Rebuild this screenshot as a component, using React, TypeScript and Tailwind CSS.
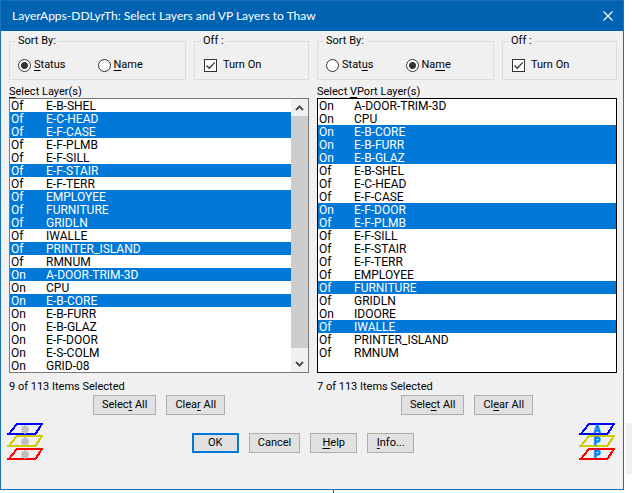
/**
 * Layer Thaw Dialog
 */

import { useState, type ReactNode } from 'react';

type Layer = { state: 'On' | 'Of'; name: string; selected?: boolean };

const LAYERS: Layer[] = [
  { state: 'Of', name: 'E-B-SHEL' },
  { state: 'Of', name: 'E-C-HEAD', selected: true },
  { state: 'Of', name: 'E-F-CASE', selected: true },
  { state: 'Of', name: 'E-F-PLMB' },
  { state: 'Of', name: 'E-F-SILL' },
  { state: 'Of', name: 'E-F-STAIR', selected: true },
  { state: 'Of', name: 'E-F-TERR' },
  { state: 'Of', name: 'EMPLOYEE', selected: true },
  { state: 'Of', name: 'FURNITURE', selected: true },
  { state: 'Of', name: 'GRIDLN', selected: true },
  { state: 'Of', name: 'IWALLE' },
  { state: 'Of', name: 'PRINTER_ISLAND', selected: true },
  { state: 'Of', name: 'RMNUM' },
  { state: 'On', name: 'A-DOOR-TRIM-3D', selected: true },
  { state: 'On', name: 'CPU' },
  { state: 'On', name: 'E-B-CORE', selected: true },
  { state: 'On', name: 'E-B-FURR' },
  { state: 'On', name: 'E-B-GLAZ' },
  { state: 'On', name: 'E-F-DOOR' },
  { state: 'On', name: 'E-S-COLM' },
  { state: 'On', name: 'GRID-08' },
];

const VPORT_LAYERS: Layer[] = [
  { state: 'On', name: 'A-DOOR-TRIM-3D' },
  { state: 'On', name: 'CPU' },
  { state: 'On', name: 'E-B-CORE', selected: true },
  { state: 'On', name: 'E-B-FURR', selected: true },
  { state: 'On', name: 'E-B-GLAZ', selected: true },
  { state: 'Of', name: 'E-B-SHEL' },
  { state: 'Of', name: 'E-C-HEAD' },
  { state: 'Of', name: 'E-F-CASE' },
  { state: 'On', name: 'E-F-DOOR', selected: true },
  { state: 'Of', name: 'E-F-PLMB', selected: true },
  { state: 'Of', name: 'E-F-SILL' },
  { state: 'Of', name: 'E-F-STAIR' },
  { state: 'Of', name: 'E-F-TERR' },
  { state: 'Of', name: 'EMPLOYEE' },
  { state: 'Of', name: 'FURNITURE', selected: true },
  { state: 'Of', name: 'GRIDLN' },
  { state: 'On', name: 'IDOORE' },
  { state: 'Of', name: 'IWALLE', selected: true },
  { state: 'Of', name: 'PRINTER_ISLAND' },
  { state: 'Of', name: 'RMNUM' },
];

function Key({ children }: { children: ReactNode }) {
  return <span className="underline underline-offset-2">{children}</span>;
}

function Group({ title, className, children }: { title: string; className: string; children: ReactNode }) {
  return (
    <fieldset className={`min-w-0 border border-[#dcdcdc] px-2 pb-[6px] ${className}`}>
      <legend className="px-[2px] -ml-[2px] leading-4">{title}</legend>
      <div className="flex h-4 mt-2">{children}</div>
    </fieldset>
  );
}

function Radio({ name, defaultChecked, children }: { name: string; defaultChecked?: boolean; children: ReactNode }) {
  return (
    <label className="flex items-center gap-[3px] w-[84px]">
      <input
        type="radio"
        name={name}
        defaultChecked={defaultChecked}
        className="appearance-none shrink-0 w-[13px] h-[13px] rounded-full border border-[#333] bg-white checked:bg-[radial-gradient(circle,#333_3px,#fff_4px)]"
      />
      <span>{children}</span>
    </label>
  );
}

function CheckBox({ children }: { children: ReactNode }) {
  const [checked, setChecked] = useState(true);
  return (
    <label className="flex items-center gap-[6px] pl-px">
      <span className="grid">
        <input
          type="checkbox"
          checked={checked}
          onChange={(e) => setChecked(e.target.checked)}
          className="appearance-none col-start-1 row-start-1 w-[13px] h-[13px] border border-[#333] bg-white"
        />
        {checked && (
          <svg viewBox="0 0 13 13" className="col-start-1 row-start-1 w-[13px] h-[13px] pointer-events-none">
            <path d="M2.5 6.5 L5.2 9.2 L10.8 3.4" fill="none" stroke="#333" strokeWidth="1.3" />
          </svg>
        )}
      </span>
      <span>{children}</span>
    </label>
  );
}

function DialogButton({ primary, children }: { primary?: boolean; children: ReactNode }) {
  return (
    <button
      type="button"
      className={
        primary
          ? 'h-5 min-w-[47px] px-2 border-2 border-[#0078d7] bg-[#e1e1e1] leading-4'
          : 'h-5 min-w-[47px] px-2 border border-[#adadad] bg-[#e1e1e1] leading-4'
      }
    >
      {children}
    </button>
  );
}

function Arrow({ label, d }: { label: string; d: string }) {
  return (
    <button type="button" aria-label={label} className="flex h-[17px] items-center justify-center bg-[#f0f0f0]">
      <svg viewBox="0 0 9 6" className="w-[9px] h-[6px]">
        <path d={d} fill="none" stroke="#505050" strokeWidth="2" />
      </svg>
    </button>
  );
}

type PanelProps = {
  id: string;
  sortBy: 'status' | 'name';
  status: ReactNode;
  name: ReactNode;
  caption: ReactNode;
  initial: Layer[];
  scroll?: boolean;
  selectAll: ReactNode;
  clearAll: ReactNode;
};

function LayerPanel({ id, sortBy, status, name, caption, initial, scroll, selectAll, clearAll }: PanelProps) {
  const [layers, setLayers] = useState(initial);
  const count = layers.filter((l) => l.selected).length;

  const toggle = (index: number) => {
    setLayers(layers.map((l, i) => (i === index ? { ...l, selected: !l.selected } : l)));
  };

  return (
    <section className="min-w-0">
      <div className="flex gap-2">
        <Group title="Sort By:" className="flex-1">
          <Radio name={id} defaultChecked={sortBy === 'status'}>{status}</Radio>
          <Radio name={id} defaultChecked={sortBy === 'name'}>{name}</Radio>
        </Group>
        <Group title="Off :" className="w-[115px]">
          <CheckBox>Turn On</CheckBox>
        </Group>
      </div>

      <div id={`${id}-caption`} className="mt-1 h-[14px] leading-4">{caption}</div>

      <div className={`flex border bg-white text-[12px] ${scroll ? 'border-[#7a7a7a]' : 'border-black'}`}>
        <div role="listbox" aria-multiselectable="true" aria-labelledby={`${id}-caption`} className="flex-1 min-h-[273px]">
          {layers.map((layer, index) => (
            <button
              key={layer.name}
              type="button"
              role="option"
              aria-selected={!!layer.selected}
              onClick={() => toggle(index)}
              className={`flex w-full h-[13px] pl-px leading-[14px] text-left ${layer.selected ? 'bg-[#0078d7] text-white' : 'text-black'}`}
            >
              <span className="w-[35px]">{layer.state}</span>
              <span>{layer.name}</span>
            </button>
          ))}
        </div>
        {scroll && (
          <div className="flex flex-col w-[17px] bg-[#f0f0f0]">
            <Arrow label="Scroll up" d="M1 5 L4.5 1.5 L8 5" />
            <div className="flex-1 mb-[7px] bg-[#cdcdcd]" />
            <Arrow label="Scroll down" d="M1 1 L4.5 4.5 L8 1" />
          </div>
        )}
      </div>

      <p className="mt-[6px] h-4 leading-4">{count} of 113 Items Selected</p>
      <div className="flex justify-center gap-[10px]">
        <DialogButton>{selectAll}</DialogButton>
        <DialogButton>{clearAll}</DialogButton>
      </div>
    </section>
  );
}

const SHEETS = [
  { color: '#0000ff', y: 0 },
  { color: '#cccc00', y: 12 },
  { color: '#ff0000', y: 25 },
];

function Sheets({ letters }: { letters?: string }) {
  return (
    <svg viewBox="0 0 36 38" className="w-9 h-[38px]">
      {SHEETS.map(({ color, y }, i) => (
        <g key={color} transform={`translate(0 ${y})`}>
          <g stroke={color} shapeRendering="crispEdges">
            <path d="M9 1 H36 M0 11 H29" strokeWidth={2} />
            <path d="M9.5 1.5 L2 11 M34.5 1.5 L28.5 11" strokeWidth="2" />
          </g>
          {letters ? (
            <text x="18" y="10" textAnchor="middle" fill="#0080ff" stroke="#0080ff" strokeWidth="0.8" className="font-['Liberation_Sans'] text-[10px] font-bold">
              {letters[i]}
            </text>
          ) : (
            <g stroke="#c0c0c0" strokeWidth="2">
              <path d="M18 2 V11 M14 6.5 H22 M15 3.5 L21 9.5 M21 3.5 L15 9.5" />
              <circle cx="18" cy="6.5" r="2" fill="#c0c0c0" />
            </g>
          )}
        </g>
      ))}
    </svg>
  );
}

export default function App() {
  return (
    <div className="bg-white font-[Roboto,'Liberation_Sans',sans-serif] text-[11px] text-black">
      <div className="flex items-end">
        <main className="flex-1 border border-[#1a6fb5] bg-[#f0f0f0]">
          <header className="flex h-[30px] items-center justify-between bg-[#0063b1] pl-[11px] pr-[10px] text-white">
            <h1 className="font-[Lato,sans-serif] text-[12px]">LayerApps-DDLyrTh: Select Layers and VP Layers to Thaw</h1>
            <button type="button" aria-label="Close">
              <svg viewBox="0 0 10 10" className="w-[10px] h-[10px]">
                <path d="M0.5 0.5 L9.5 9.5 M9.5 0.5 L0.5 9.5" stroke="#fff" strokeWidth="1.1" />
              </svg>
            </button>
          </header>

          <div className="grid grid-cols-2 gap-2 pt-[2px] pl-2 pr-[6px]">
            <LayerPanel
              id="layers"
              sortBy="status"
              status={<><Key>S</Key>tatus</>}
              name={<><Key>N</Key>ame</>}
              caption={<><Key>S</Key>elect Layer(s)</>}
              initial={LAYERS}
              scroll
              selectAll={<>Selec<Key>t</Key> All</>}
              clearAll={<>Clea<Key>r</Key> All</>}
            />
            <LayerPanel
              id="vport"
              sortBy="name"
              status={<>Stat<Key>u</Key>s</>}
              name={<>Na<Key>m</Key>e</>}
              caption={<>Select <Key>V</Key>Port Layer(s)</>}
              initial={VPORT_LAYERS}
              selectAll={<>Sele<Key>c</Key>t All</>}
              clearAll={<>Cl<Key>e</Key>ar All</>}
            />
          </div>

          <footer className="flex justify-between pt-2 pl-[6px] pr-2 pb-7">
            <Sheets />
            <div className="flex gap-[10px] pt-[10px] pr-4">
              <DialogButton primary>OK</DialogButton>
              <DialogButton>Cancel</DialogButton>
              <DialogButton><Key>H</Key>elp</DialogButton>
              <DialogButton><Key>I</Key>nfo...</DialogButton>
            </div>
            <Sheets letters="APP" />
          </footer>
        </main>
        <div className="ml-[2px] mb-4 w-[6px] h-[51px] bg-[#f0f0f0]" />
      </div>
      <div className="h-[3px] w-[334px] border-r border-[#1a6fb5]" />
    </div>
  );
}
